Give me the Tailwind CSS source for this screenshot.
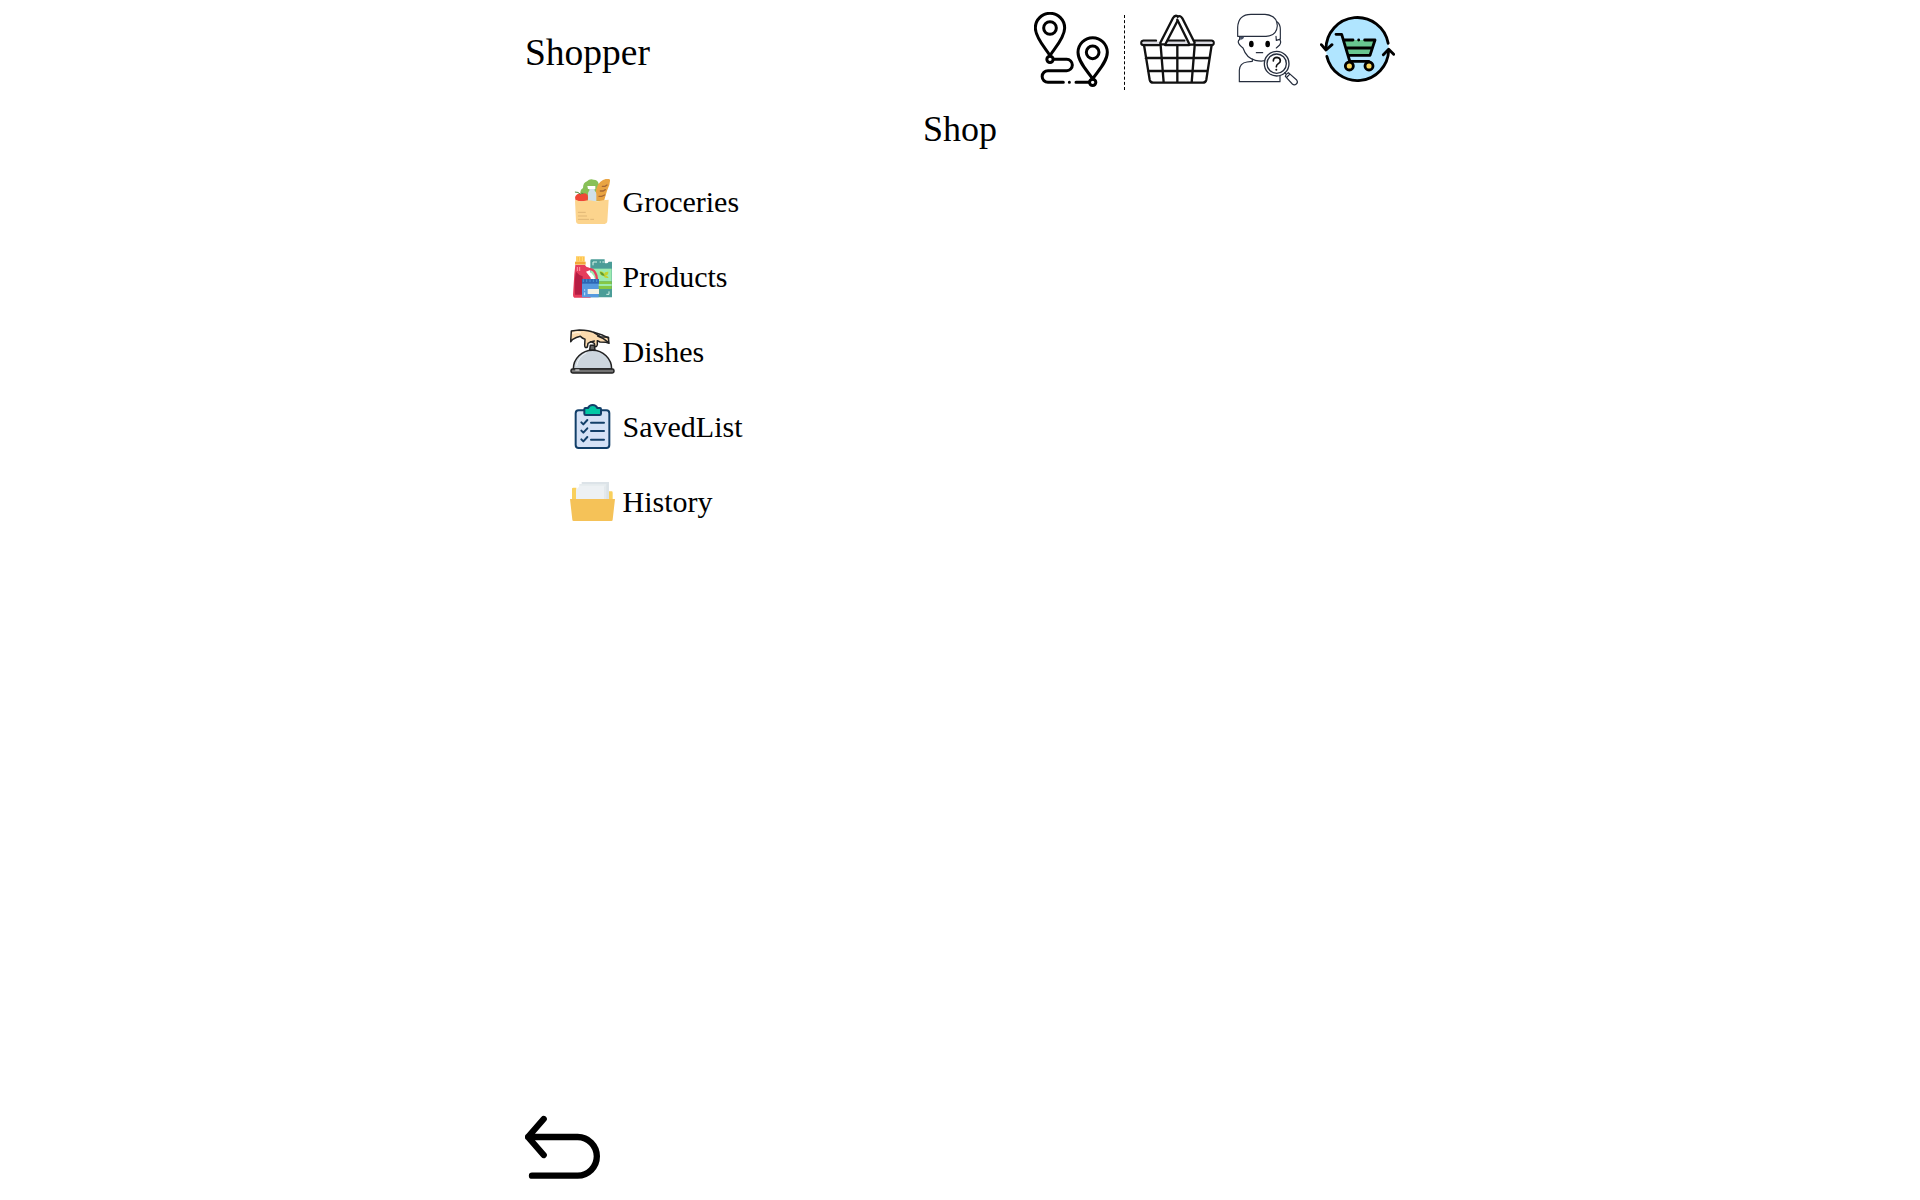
<!DOCTYPE html>
<html lang="en">
<head>
<meta charset="utf-8">
<title>Shopper</title>
<script src="https://cdn.jsdelivr.net/npm/@tailwindcss/browser@4"></script>
</head>
<body class="bg-white text-black font-['Liberation_Serif','Times_New_Roman',serif]">
<div class="mx-auto flex h-[1200px] w-[870px] flex-col">
  <header class="flex h-[105px] items-start justify-between">
    <h1 class="text-[37.5px] leading-[106px]">Shopper</h1>
    <nav class="mt-3 flex">
      <a class="block pr-[15px]" aria-label="Route">
        <svg class="size-[75px]" viewBox="42 36 225 225" fill="none" stroke="#000" stroke-width="9" stroke-linecap="round" stroke-linejoin="round">
          <path d="M90 167C78 147 46 114 46 84a44 44 0 0 1 88 0c0 30-32 63-44 83Z"/>
          <circle cx="90" cy="84" r="19"/>
          <circle cx="90" cy="178" r="9.500"/>
          <path d="M218 237c-12-20-44-50-44-80a44 44 0 0 1 88 0c0 30-32 60-44 80Z"/>
          <circle cx="218" cy="157" r="19"/>
          <circle cx="218" cy="247" r="9.500"/>
          <path d="M100 178h40a17 17 0 0 1 0 34H84a17.500 17.500 0 0 0 0 35h46M148 247h.1M168 247h40"/>
        </svg>
      </a>
      <div class="mt-[3px] h-[75px] border-l border-dashed border-black"></div>
      <a class="block pl-[15px]" aria-label="Basket">
        <svg class="size-[75px]" viewBox="90 36 225 225" fill="none" stroke="#111" stroke-width="7" stroke-linecap="round" stroke-linejoin="round">
          <path d="M102 135l17 104q2 9 11 9h148q9 0 11-9l16-104M107 174h192M114 213h178M202 137v110M152 137l9 110M254 137l-9 110"/>
          <path d="M148 135H100q-6 0-6-6t6-7h38M254 122h50q7 0 7 7t-7 6H258M170 122h53M165 135h73"/>
          <path d="M170 128h64M100 128h46M258 128h47" stroke="#dcdce4" stroke-width="6"/>
          <path d="M151 128l38-74q5-9 13-6l5 6-41 79h-15Z" fill="#fff"/>
          <path d="M203 50q8-5 14 5l37 73-2 6h-13l-37-75" fill="#fff"/>
        </svg>
      </a>
      <a class="block pl-[15px]" aria-label="Find customer">
        <svg class="size-[75px]" viewBox="30 36 225 225" fill="none" stroke="#252d3d" stroke-width="3.500" stroke-linecap="round" stroke-linejoin="round">
          <path d="M59 110v9q-5 1-4 8t14 17q10 30 37 37 25 6 43-4M168 109l1 12 10-3q6 8 0 17l-10 9M172 66q9 8 9 22v30"/>
          <path d="M53 109V82q2-39 40-39h42q36 3 37 34-2 30-34 32Z" fill="#fff"/>
          <path d="M60 110h12q0 8-11 9Z" fill="#465065" stroke="none"/>
          <path d="M97 177v7l-16 2q-22 3-23 25v34h122v-20"/>
          <ellipse cx="94" cy="132" rx="7" ry="10" fill="#000" stroke="none"/>
          <ellipse cx="143" cy="132" rx="7" ry="10" fill="#000" stroke="none"/>
          <path d="M109 158h19"/>
          <circle cx="170" cy="191" r="37" fill="#fff" stroke-width="4"/>
          <circle cx="170" cy="191" r="29" stroke-width="4"/>
          <path d="M160 183q0-11 11-11 10 1 10 10 0 5-6 9-6 4-6 9" stroke="#111" stroke-width="5"/>
          <circle cx="169" cy="209" r="3" fill="#111" stroke="none"/>
          <path d="M198 224l7-6 25 22q5 7-1 12t-12 0l-21-23ZM201 231l8-8M194 218l5 5" fill="#fff"/>
        </svg>
      </a>
      <a class="block pl-[15px]" aria-label="Reorder">
        <svg class="size-[75px]" viewBox="30 36 225 225" fill="none" stroke="#000" stroke-width="8.500" stroke-linecap="round" stroke-linejoin="round">
          <circle cx="142" cy="147" r="94" fill="#b0e5ff" stroke="none"/>
          <path d="M48 148A94 94 0 0 1 234.500 130M236 151A94 94 0 0 1 50.500 169"/>
          <path d="M34 134l14 16 18-16M220 164l16-16 15 15"/>
          <path d="M104 120h91l-15 47h-62Z" fill="#68c790" stroke="none"/>
          <path d="M78 103h17l25 83M105 120h24M146 120h.1M164 120h31l-15 46h-62M112 144h73M119 184h57"/>
          <circle cx="118" cy="198" r="12" fill="#f8d75d"/>
          <circle cx="177" cy="198" r="12" fill="#f8d75d"/>
        </svg>
      </a>
    </nav>
  </header>

  <h2 class="h-[46px] text-center text-[36px] leading-[48px]">Shop</h2>

  <ul class="mt-[13px] pl-[45px] text-[30px]">
    <li class="flex h-[75px] items-center gap-[7.5px]">
      <svg class="size-[45px]" viewBox="30 27 135 135" fill="none" stroke-linecap="round">
        <path d="M60 94q-3-12 2-20-4-14 7-20 0-16 12-20 8-9 20-5 12 0 15 12 9 8 4 22v31Z" fill="#88c057"/>
        <path d="M107 92V70q2-30 22-40 18-8 21 0 1 14-9 32l-9 31Z" fill="#e9a443"/>
        <path d="M121 63h8l7-4M127 49h8l6-4M117 79h8l9-4" stroke="#a66836" stroke-width="4"/>
        <path d="M84 93V71q0-6 4-9v-5h16v5q5 4 5 10v21Z" fill="#d0e0e8"/>
        <path d="M82 48h24v9H84Z" fill="#fff"/>
        <path d="M49 94q-8-13 1-20 7-6 15-2 13-6 18 4 3 9-1 18Z" fill="#ef4736"/>
        <path d="M46 66q9-1 15 7 2-5 8-3" stroke="#508c3c" stroke-width="3"/>
        <path d="M45 91q5-2 9 1 10 4 18 1 15-4 29 0 16 3 28-2l17-2-4 65q-1 8-8 8H57q-8 0-9-8Z" fill="#fcd48d"/>
        <path d="M55 127h21M55 138h25M55 148h31M92 148h9" stroke="#dfb675" stroke-width="3"/>
      </svg>
      <span>Groceries</span>
    </li>
    <li class="flex h-[75px] items-center gap-[7.5px]">
      <svg class="size-[45px]" viewBox="30 27 135 135" fill="none">
        <path d="M91 47q0-4 4-4h39v11q9 3 12-4h10v107H91Z" fill="#4b9d98"/>
        <path d="M92 71h63v38H92Z" fill="#9cebb0"/>
        <path d="M92 109h63v23H92Z" fill="#86c844"/>
        <path d="M92 117h63v6H92Z" fill="#9cebb0"/>
        <path d="M99 61V51h12M119 51h4M127 51h5M139 148h8v-9" stroke="#d8f5e9" stroke-width="3"/>
        <path d="M119 79q13 0 13 8 2-8 13-7 1 10-9 12 8 0 10 7-13 2-16-7-12 1-11-13Z" fill="#c4d22f"/>
        <path d="M120 80q10 1 14 12-12 1-14-12Z" fill="#5c9c35"/>
        <path d="M80 72q18-2 25 10 6 9 6 22" stroke="#e63d5c" stroke-width="7"/>
        <path d="M78 79q20 0 27 24H84Z" fill="#fff"/>
        <path d="M46 60h29q2 6 12 8l2 8-11 4 14 18v60H43q-4-2-4-8l4-63Z" fill="#e63d5c"/>
        <path d="M48 80q10 12 20 14v55H45q-3-40 3-69Z" fill="#b61d43"/>
        <path d="M52 66v12M59 66v12" stroke="#ff9aa9" stroke-width="3"/>
        <path d="M48 34h26v16H48Z" fill="#ffc34b"/>
        <path d="M45 50h32v9H45Z" fill="#f2a638"/>
        <path d="M51 35v13M59 35v13M67 35v13" stroke="#ffdc7d" stroke-width="3"/>
        <path d="M67 111h49v46H66V120Z" fill="#5699df"/>
        <path d="M66 102h51v14H66Z" fill="#2e66b4"/>
        <path d="M70 103v8M80 103v8M90 103v8M100 103v8M110 103v8" stroke="#4993d7" stroke-width="3"/>
        <path d="M83 132h34v15H83Z" fill="#f4f2e4"/>
        <path d="M74 133v4M74 142v9" stroke="#c8e5fb" stroke-width="3"/>
      </svg>
      <span>Products</span>
    </li>
    <li class="flex h-[75px] items-center gap-[7.5px]">
      <svg class="size-[45px]" viewBox="30 27 135 135" fill="none" stroke="#222" stroke-width="4.500" stroke-linecap="round" stroke-linejoin="round">
        <path d="M40 147a57.500 56 0 0 1 115 0Z" fill="#cdd6de"/>
        <path d="M50 137q5-28 28-38" stroke="#f1f5f8" stroke-width="3"/>
        <path d="M91 76h12l2 14H89Z" fill="#666"/>
        <path d="M34 33l24-3q30 1 43 7l20 13 24 2 2 18-9-3-18-1-8-4v12q-2 8-7 6l-2-10-10-5-9 5-2 11q-8 5-8-6l1-17q-9-3-14-9-12 3-24 10l-5 6Z" fill="#fbdaae"/>
        <path d="M101 37l28 9 17 8M113 48l17 8 15 11M103 63l-11 3"/>
        <path d="M38 40q12-5 23-2" stroke="#fff0d8"/>
        <rect x="33" y="147" width="129" height="12" rx="5" fill="#737373"/>
        <path d="M47 150h10" stroke="#f2f2f2" stroke-width="3"/>
      </svg>
      <span>Dishes</span>
    </li>
    <li class="flex h-[75px] items-center gap-[7.5px]">
      <svg class="size-[45px]" viewBox="30 27 135 135" fill="none" stroke="#123f69" stroke-width="6" stroke-linecap="round" stroke-linejoin="round">
        <rect x="47" y="46" width="101" height="113" rx="9" fill="#d4e1f6"/>
        <path d="M76 39h8q4-9 14-9t14 9h8q3 0 3 4v13q0 4-4 4H77q-4 0-4-4V43q0-4 3-4Z" fill="#00c8a5"/>
        <path d="M64 82l6 6 12-13M64 107l6 6 12-13M64 133l6 6 12-13M93 83h39M93 108h39M93 134h39"/>
      </svg>
      <span>SavedList</span>
    </li>
    <li class="flex h-[75px] items-center gap-[7.5px]">
      <svg class="size-[45px]" viewBox="30 27 135 135" fill="none">
        <path d="M36 56q0-3 4-3h9v37H36ZM147 64h8q3 0 3 4v22h-11Z" fill="#f9d05c"/>
        <path d="M65 36h82v54H65Z" fill="#dce3e8"/>
        <path d="M58 42h82v48H58Z" fill="#e5ebee"/>
        <path d="M60 47h74v43H48V59Z" fill="#edf1f4"/>
        <path d="M140 43v46M134 49v40" stroke="#d8e0e5" stroke-width="1.500"/>
        <path d="M30 87h135l-7 62q0 4-4 4H41q-4 0-4-4Z" fill="#f5c258"/>
      </svg>
      <span>History</span>
    </li>
  </ul>

  <footer class="mt-auto mb-[15px]">
    <a class="block w-fit" aria-label="Back">
      <svg class="size-[75px]" viewBox="45 30 225 225" fill="none" stroke="#000" stroke-width="19" stroke-linecap="round" stroke-linejoin="round">
        <path d="M101 57L54 111l47 54M54 111h149a57.500 58 0 0 1 0 116H66"/>
      </svg>
    </a>
  </footer>
</div>
</body>
</html>
